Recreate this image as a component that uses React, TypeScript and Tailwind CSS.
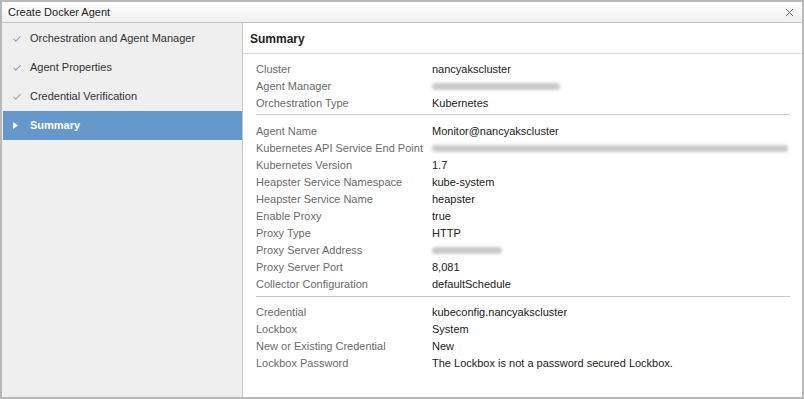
import { Check, X } from "lucide-react";

const steps = [
  { label: "Orchestration and Agent Manager", done: true },
  { label: "Agent Properties", done: true },
  { label: "Credential Verification", done: true },
  { label: "Summary", done: false },
];

type Row = { label: string; value?: string; blur?: number };

const sections: { gap: string; rows: Row[] }[] = [
  {
    gap: "",
    rows: [
      { label: "Cluster", value: "nancyakscluster" },
      { label: "Agent Manager", blur: 128 },
      { label: "Orchestration Type", value: "Kubernetes" },
    ],
  },
  {
    gap: "border-t border-[#c8c8c8] mt-[2px] pt-[8px]",
    rows: [
      { label: "Agent Name", value: "Monitor@nancyakscluster" },
      { label: "Kubernetes API Service End Point", blur: 356 },
      { label: "Kubernetes Version", value: "1.7" },
      { label: "Heapster Service Namespace", value: "kube-system" },
      { label: "Heapster Service Name", value: "heapster" },
      { label: "Enable Proxy", value: "true" },
      { label: "Proxy Type", value: "HTTP" },
      { label: "Proxy Server Address", blur: 70 },
      { label: "Proxy Server Port", value: "8,081" },
      { label: "Collector Configuration", value: "defaultSchedule" },
    ],
  },
  {
    gap: "border-t border-[#c8c8c8] mt-[3px] pt-[7px]",
    rows: [
      { label: "Credential", value: "kubeconfig.nancyakscluster" },
      { label: "Lockbox", value: "System" },
      { label: "New or Existing Credential", value: "New" },
      { label: "Lockbox Password", value: "The Lockbox is not a password secured Lockbox." },
    ],
  },
];

export default function App() {
  return (
    <div
      className="w-[804px] h-[399px] border-2 border-[#b8b8b8] bg-white flex flex-col text-[11px] text-[#333]"
      style={{ fontFamily: "'Liberation Sans', Arial, sans-serif" }}
    >
      <div className="h-[21px] flex items-center justify-between pl-[6px] pr-[6px] border-b border-[#c4c4c4] bg-gradient-to-b from-white to-[#f0f0f0] text-[#222]">
        <span>Create Docker Agent</span>
        <X size={13} strokeWidth={1.8} className="text-[#666]" />
      </div>
      <div className="flex flex-1 min-h-0">
        <div className="w-[241px] bg-[#efefef] border-r border-[#c4c4c4] pt-[1px] pl-[1px]">
          {steps.map((s) =>
            s.done ? (
              <div key={s.label} className="h-[29px] flex items-center text-[#333]">
                <Check size={10} strokeWidth={2.5} className="ml-[9px] mr-[8px] text-[#9a9a9a]" />
                <span>{s.label}</span>
              </div>
            ) : (
              <div key={s.label} className="h-[29px] flex items-center bg-[#6598cc] text-white font-bold">
                <svg width="5" height="7" viewBox="0 0 5 7" className="ml-[10px] mr-[12px]">
                  <path d="M0 0 L5 3.5 L0 7 Z" fill="white" />
                </svg>
                <span>{s.label}</span>
              </div>
            ),
          )}
        </div>
        <div className="flex-1 flex flex-col">
          <div className="h-[31px] flex items-center pl-[7px] pt-[1px] border-b border-[#d8d8d8] font-bold text-[#222] text-[12px]">
            Summary
          </div>
          <div className="pl-[13px] pr-[12px] pt-[7px]">
            {sections.map((sec, i) => (
              <div key={i} className={sec.gap}>
                {sec.rows.map((r) => (
                  <div key={r.label} className="h-[17px] flex items-center">
                    <span className="w-[176px] shrink-0 text-[#6b6b6b] whitespace-nowrap">{r.label}</span>
                    {r.value ? (
                      <span className="text-[#222] whitespace-nowrap">{r.value}</span>
                    ) : (
                      <span
                        className="h-[7px] rounded-sm bg-[#c9c9c9] blur-[1.5px]"
                        style={{ width: r.blur }}
                      />
                    )}
                  </div>
                ))}
              </div>
            ))}
          </div>
        </div>
      </div>
    </div>
  );
}
